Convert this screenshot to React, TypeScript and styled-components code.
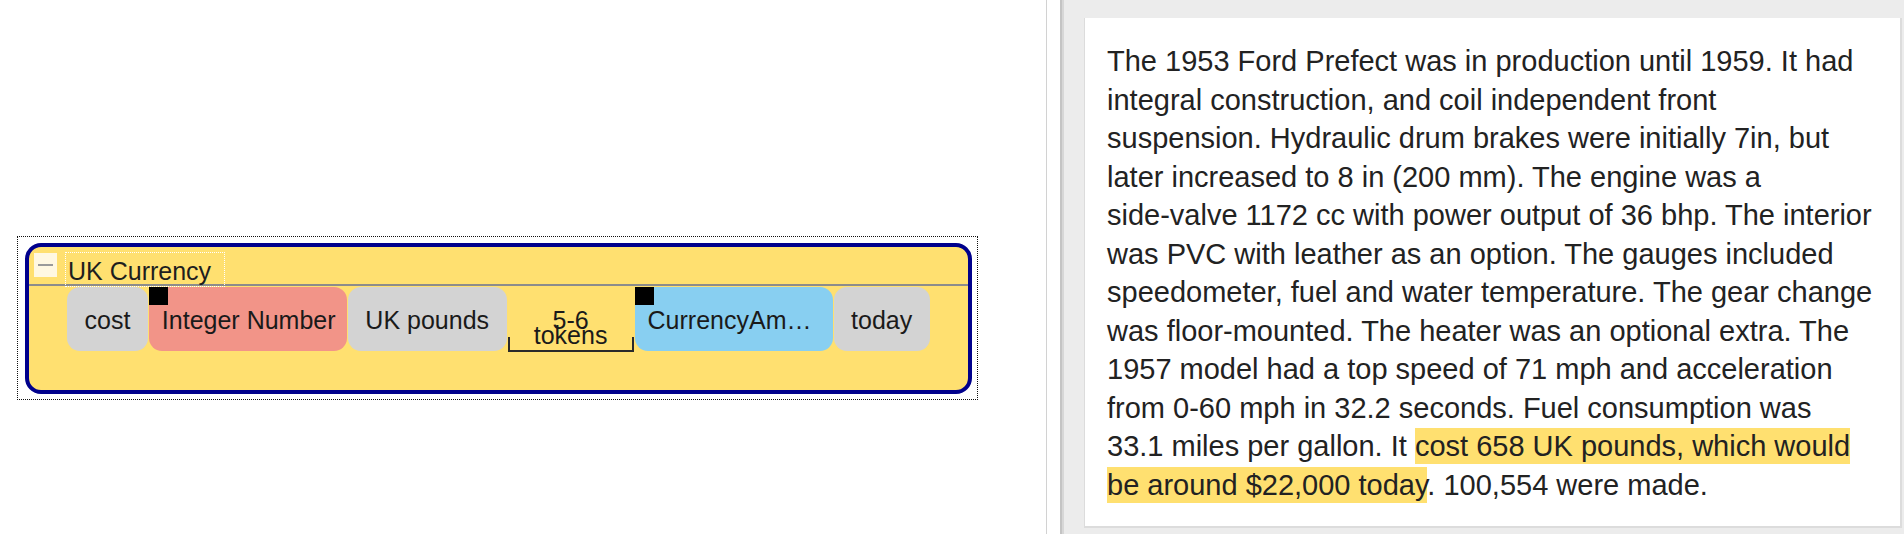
import React from "react";
import styled, { createGlobalStyle } from "styled-components";

const GlobalStyle = createGlobalStyle`
  *, *::before, *::after { box-sizing: border-box; }
  html, body { margin: 0; padding: 0; background: #ffffff; }
  body {
    font-family: "Liberation Sans", Arial, sans-serif;
    color: #1e1e1e;
    overflow: hidden;
  }
`;

const Page = styled.div`
  display: flex;
  height: 534px;
  width: 1904px;
  overflow: hidden;
`;

const LeftPane = styled.div`
  width: 1047px;
  flex: none;
  border-right: 1px solid #d2d2d2;
  padding: 236px 0 0 17px;
  background: #ffffff;
`;

const Gutter = styled.div`
  width: 13px;
  flex: none;
  background: #ffffff;
`;

const Splitter = styled.div`
  width: 4px;
  flex: none;
  background: linear-gradient(to right, #c4c4c4 0 50%, #d7d7d7 50% 100%);
`;

const RightPane = styled.div`
  flex: 1;
  background: #ececec;
  padding: 18px 0 0 20px;
  overflow: hidden;
`;

const Card = styled.div`
  width: 818px;
  background: #ffffff;
  border: 2px solid #dcdcdc;
  border-top: none;
  border-left-width: 1px;
  padding: 24px 20px 22px 22px;
`;

const Paragraph = styled.p`
  margin: 0;
  font-size: 29px;
  line-height: 38.5px;
  color: #222222;
  white-space: nowrap;
`;

const Highlight = styled.span`
  background: #ffe070;
  padding: 2px 0;
`;

const SelectionFrame = styled.div`
  width: 961px;
  border: 1px dotted #111111;
  padding: 6px 5px 5px 7px;
`;

const Annotation = styled.div`
  height: 151px;
  border: 4px solid #00008c;
  border-radius: 16px;
  background: #ffe070;
`;

const Header = styled.div`
  display: flex;
  align-items: flex-start;
  gap: 8px;
  height: 39px;
  padding-left: 5px;
  border-bottom: 2px solid #8c8c8c;
`;

const CollapseButton = styled.div`
  margin-top: 6px;
  width: 23px;
  height: 24px;
  background: #fff8e2;
  display: flex;
  align-items: center;
  justify-content: center;
  &::before {
    content: "";
    width: 15px;
    height: 2px;
    background: #9a9a9a;
  }
`;

const Title = styled.div`
  margin-top: 5px;
  height: 35px;
  padding: 3px 13px 0 2px;
  border: 1px dotted #ffffff;
  font-size: 25px;
  line-height: 31px;
  white-space: nowrap;
  position: relative;
`;

const TokenRow = styled.div`
  display: flex;
  gap: 1px;
  padding: 1px 0 0 38px;
`;

const Chip = styled.div<{ $tone: "plain" | "number" | "currency" }>`
  position: relative;
  height: 64px;
  border-radius: 13px;
  font-size: 25px;
  line-height: 61px;
  padding-top: 3px;
  white-space: nowrap;
  color: #1a1a1a;
  background: ${(p) =>
    p.$tone === "number" ? "#f29488" : p.$tone === "currency" ? "#88cff1" : "#d3d3d3"};
  ${(p) =>
    p.$tone === "plain"
      ? `padding-left: 17.5px; padding-right: 17.5px;`
      : `width: 198px; padding-left: 13px; padding-right: 11px;`}
`;

const ChipLabel = styled.span`
  display: block;
  overflow: hidden;
  text-overflow: ellipsis;
  white-space: nowrap;
`;

const Marker = styled.span`
  position: absolute;
  top: 0;
  left: 0;
  width: 19px;
  height: 18px;
  background: #000000;
`;

const GapSpan = styled.div`
  position: relative;
  width: 126px;
  height: 64px;
  display: flex;
  flex-direction: column;
  justify-content: flex-end;
  align-items: center;
  padding-bottom: 8px;
  font-size: 25px;
  line-height: 15px;
  color: #1a1a1a;
  &::after {
    content: "";
    position: absolute;
    left: 0;
    right: 0;
    bottom: -1px;
    height: 15px;
    border: 2px solid #2a2a2a;
    border-top: none;
  }
`;

type Token =
  | { kind: "plain"; text: string }
  | { kind: "number" | "currency"; text: string }
  | { kind: "gap"; lines: [string, string] };

const tokens: Token[] = [
  { kind: "plain", text: "cost" },
  { kind: "number", text: "Integer Number" },
  { kind: "plain", text: "UK pounds" },
  { kind: "gap", lines: ["5-6", "tokens"] },
  { kind: "currency", text: "CurrencyAmount" },
  { kind: "plain", text: "today" },
];

const textLines: React.ReactNode[] = [
  "The 1953 Ford Prefect was in production until 1959. It had",
  "integral construction, and coil independent front",
  "suspension. Hydraulic drum brakes were initially 7in, but",
  "later increased to 8 in (200 mm). The engine was a",
  "side-valve 1172 cc with power output of 36 bhp. The interior",
  "was PVC with leather as an option. The gauges included",
  "speedometer, fuel and water temperature. The gear change",
  "was floor-mounted. The heater was an optional extra. The",
  "1957 model had a top speed of 71 mph and acceleration",
  "from 0-60 mph in 32.2 seconds. Fuel consumption was",
];

export default function App() {
  return (
    <>
      <GlobalStyle />
      <Page>
        <LeftPane>
          <SelectionFrame>
            <Annotation>
              <Header>
                <CollapseButton />
                <Title>UK Currency</Title>
              </Header>
              <TokenRow>
                {tokens.map((t, i) =>
                  t.kind === "gap" ? (
                    <GapSpan key={i}>
                      <span>{t.lines[0]}</span>
                      <span>{t.lines[1]}</span>
                    </GapSpan>
                  ) : t.kind === "plain" ? (
                    <Chip key={i} $tone="plain">
                      {t.text}
                    </Chip>
                  ) : (
                    <Chip key={i} $tone={t.kind}>
                      <Marker />
                      <ChipLabel>{t.text}</ChipLabel>
                    </Chip>
                  )
                )}
              </TokenRow>
            </Annotation>
          </SelectionFrame>
        </LeftPane>
        <Gutter />
        <Splitter />
        <RightPane>
          <Card>
            <Paragraph>
              {textLines.map((l, i) => (
                <React.Fragment key={i}>
                  {l}
                  <br />
                </React.Fragment>
              ))}
              33.1 miles per gallon. It{" "}
              <Highlight>
                cost 658 UK pounds, which would
                <br />
                be around $22,000 today
              </Highlight>
              . 100,554 were made.
            </Paragraph>
          </Card>
        </RightPane>
      </Page>
    </>
  );
}
